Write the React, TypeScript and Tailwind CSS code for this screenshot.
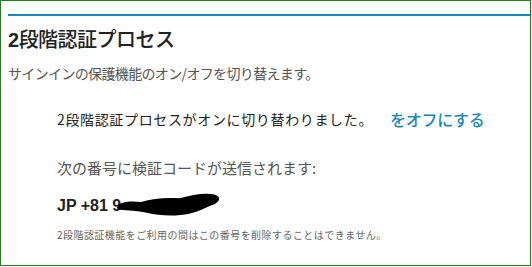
import React from 'react';

const jp = { fontFamily: '"Noto Sans CJK JP", "Liberation Sans", sans-serif' };

const Redaction: React.FC = () => (
  <svg width="106" height="26" viewBox="0 0 110 26" className="-ml-[5px] -mt-[3px]">
    <path
      d="M2 14 C 6 9, 16 9, 26 10 C 38 6, 52 5, 66 6 C 80 2, 92 0, 102 2 C 110 4, 108 10, 100 13 C 92 16, 86 20, 76 22 C 62 25, 44 24, 32 21 C 22 19, 12 19, 4 18 C 1 17, 0 15, 2 14 Z"
      fill="#000"
    />
  </svg>
);

const App: React.FC = () => {
  return (
    <div className="w-[532px] h-[267px] bg-white">
      <div className="w-[531px] h-[266px] border border-[#237a23] bg-white flex flex-col text-[#222]" style={jp}>
        <div className="mt-[13px] ml-[7px] h-[2px] bg-[#1b87b5]" />

        <h1 className="ml-[7px] mt-[9px] text-[20px] leading-[28px] font-medium tracking-[-0.5px] text-[#222]">
          <span className="font-bold" style={{ fontFamily: '"Liberation Sans", sans-serif' }}>2</span>段階認証プロセス
        </h1>

        <p className="ml-[7px] mt-[9px] text-[14px] leading-[20px] text-[#555] tracking-[-0.65px]">
          サインインの保護機能のオン/オフを切り替えます。
        </p>

        <div className="ml-[56px] mt-[26px] flex items-center text-[14px] leading-[20px]">
          <span className="text-[#222] tracking-[0.65px]">2段階認証プロセスがオンに切り替わりました。</span>
          <a className="ml-[17px] text-[16px] font-medium text-[#1b87b5] tracking-[-0.3px]">をオフにする</a>
        </div>

        <p className="ml-[56px] mt-[29px] text-[15px] leading-[20px] text-[#555] tracking-[0px]">
          次の番号に検証コードが送信されます:
        </p>

        <div className="ml-[56px] mt-[18px] flex items-center h-[20px]">
          <span className="text-[16px] font-bold text-[#222]" style={{ fontFamily: '"Liberation Sans", sans-serif' }}>
            JP +81 9
          </span>
          <Redaction />
        </div>

        <p className="ml-[56px] mt-[12px] text-[10px] leading-[14px] text-[#666] tracking-[0.45px]">
          2段階認証機能をご利用の間はこの番号を削除することはできません。
        </p>
      </div>
    </div>
  );
};

export default App;
